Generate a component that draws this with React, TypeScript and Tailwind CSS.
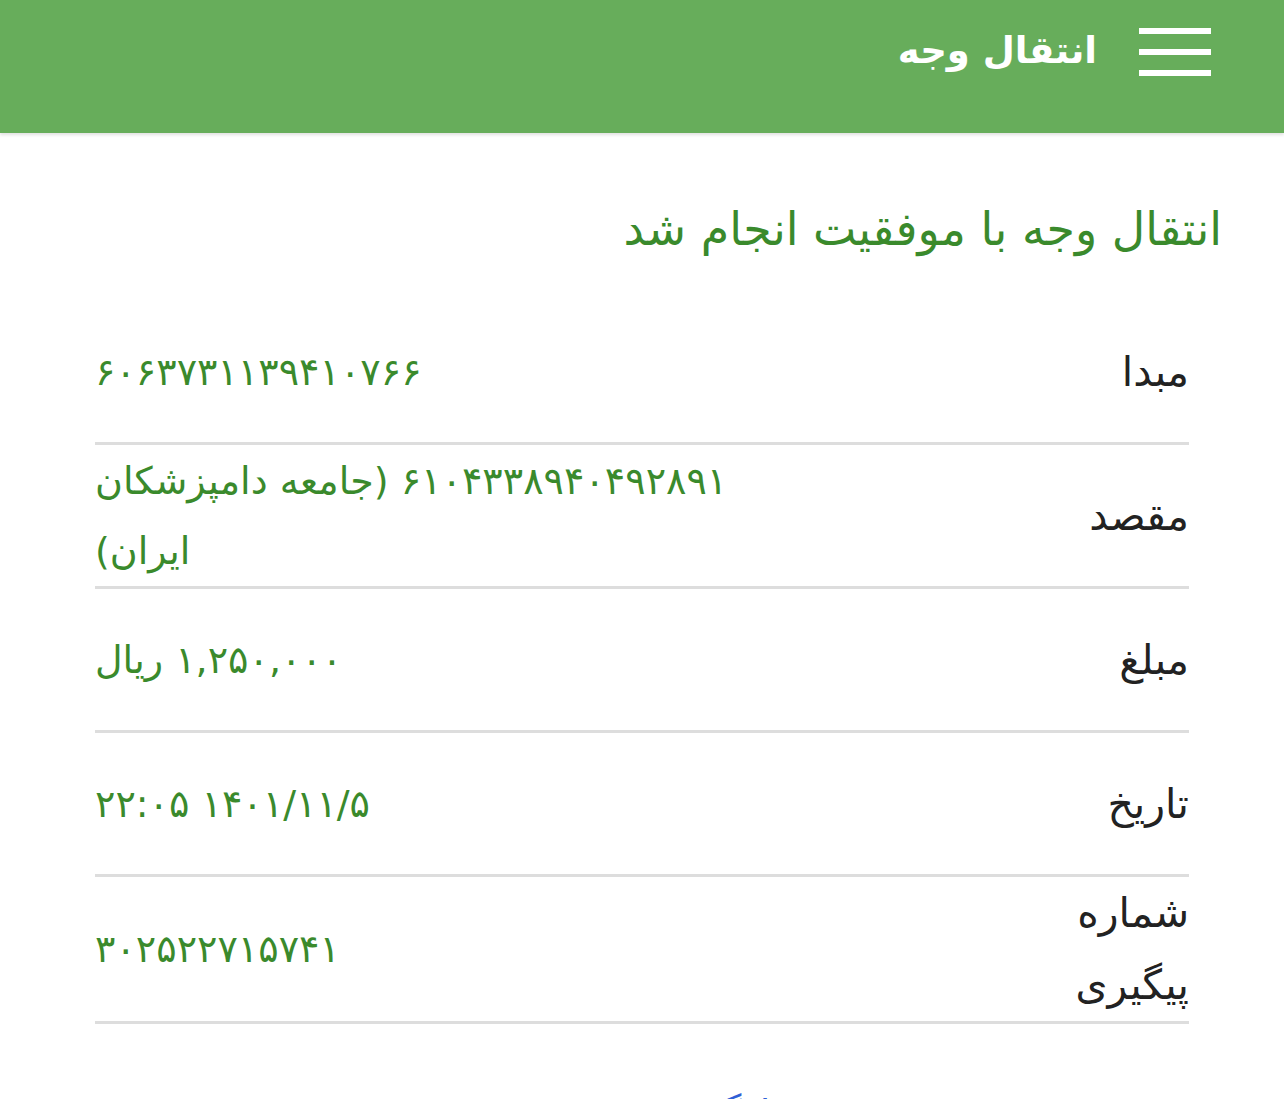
import React from 'react';

type Row = {
  label: string;
  value: string;
};

const ROWS: Row[] = [
  { label: 'مبدا', value: '۶۰۶۳۷۳۱۱۳۹۴۱۰۷۶۶' },
  { label: 'مقصد', value: '۶۱۰۴۳۳۸۹۴۰۴۹۲۸۹۱ (جامعه دامپزشکان ایران)' },
  { label: 'مبلغ', value: '۱,۲۵۰,۰۰۰ ریال' },
  { label: 'تاریخ', value: '۱۴۰۱/۱۱/۵ ۲۲:۰۵' },
  { label: 'شماره پیگیری', value: '۳۰۲۵۲۲۷۱۵۷۴۱' },
];

export default function App() {
  return (
    <div
      dir="rtl"
      className="min-h-screen bg-white overflow-hidden"
      style={{ fontFamily: '"DejaVu Sans", "Noto Sans", sans-serif' }}
    >
      {/* نوار بالا */}
      <header className="h-[133px] bg-[#67ad5b] shadow-[0_2px_3px_rgba(0,0,0,0.12)] flex items-start pt-[27px] pr-[73px] gap-[42px]">
        <button className="w-[72px] h-[50px] flex flex-col justify-between py-[1px]">
          <span className="block h-[6px] w-full bg-white" />
          <span className="block h-[6px] w-full bg-white" />
          <span className="block h-[6px] w-full bg-white" />
        </button>
        <h1 className="text-white text-[37px] font-bold leading-[48px]">انتقال وجه</h1>
      </header>

      <main className="pt-[58px]">
        <h2 className="pr-[62px] text-[#3a8a2c] text-[46px] leading-[76px]">
          انتقال وجه با موفقیت انجام شد
        </h2>

        <div className="mx-[95px] mt-[34px]">
          {ROWS.map((row) => (
            <div
              key={row.label}
              className="flex items-center min-h-[144px] border-b-[3px] border-[#dddddd]"
            >
              <div className="w-[130px] text-right text-[#222222] text-[41px] leading-[72px]">
                {row.label}
              </div>
              <div className="flex-1" />
              <div className="w-[680px] text-left text-[#3a8a2c] text-[38px] leading-[70px]">
                {row.value}
              </div>
            </div>
          ))}
        </div>

        <div className="mt-[60px] text-center">
          <a className="text-[#2f5fd6] text-[38px] leading-[60px] pl-[150px]">بازگشت</a>
        </div>
      </main>
    </div>
  );
}
